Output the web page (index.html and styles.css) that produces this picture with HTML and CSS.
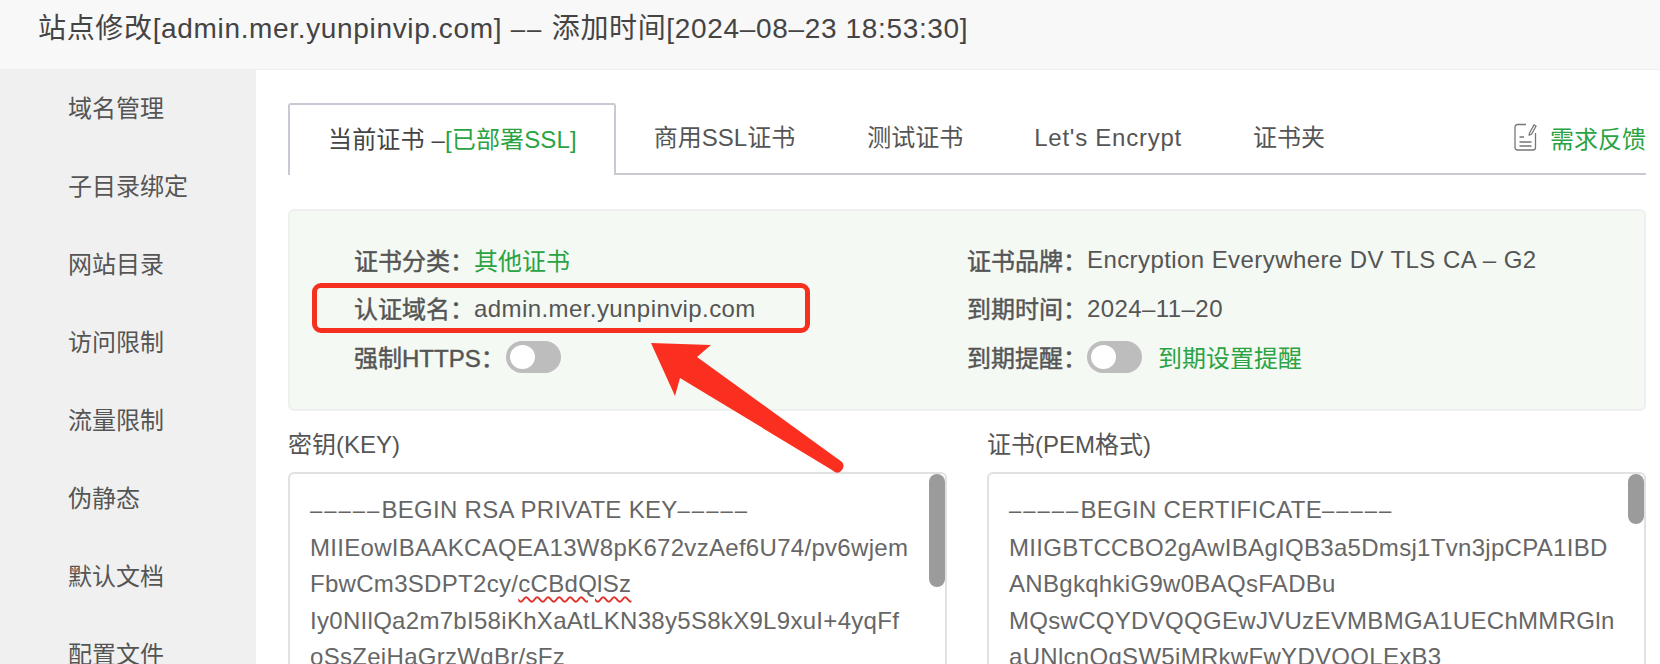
FILE: index.html
```html
<!DOCTYPE html>
<html lang="zh-CN">
<head>
<meta charset="utf-8">
<title>站点修改</title>
<link rel="stylesheet" href="styles.css">
</head>
<body>
<header class="title">站点修改[admin.mer.yunpinvip.com] <span class="dash">––</span> 添加时间[2024–08–23 18:53:30]</header>
<div class="shell">
  <nav class="side">
    <a>域名管理</a><a>子目录绑定</a><a>网站目录</a><a>访问限制</a><a>流量限制</a><a>伪静态</a><a>默认文档</a><a>配置文件</a>
  </nav>
  <main class="content">
    <div class="tabs">
      <span class="tab active">当前证书 –<span class="green">[已部署SSL]</span></span>
      <span class="tab">商用SSL证书</span>
      <span class="tab">测试证书</span>
      <span class="tab lat-wide">Let's Encrypt</span>
      <span class="tab">证书夹</span>
      <span class="feedback">
        <svg class="fb-icon" viewBox="0 0 23 28" width="23" height="28" fill="none" stroke="#777" stroke-width="1.3">
          <path d="M12 1.500H3.500A2.500 2.500 0 0 0 1 4V24.500A2.500 2.500 0 0 0 3.500 27h15.500a2.500 2.500 0 0 0 2.500-2.500V10"/>
          <path d="M15.500 10 20 2 22 3.200 17.500 11.200l-2.300.9z"/>
          <path d="M5.500 14h4.500M5.500 19h12M5.500 23h12"/>
        </svg>
        <span class="green">需求反馈</span>
      </span>
    </div>

    <section class="alert">
      <div class="info">
        <div class="row"><b class="lab">证书分类<i>：</i></b><span class="green">其他证书</span></div>
        <div class="row"><b class="lab">证书品牌<i>：</i></b><span class="lat">Encryption Everywhere DV TLS CA – G2</span></div>
        <div class="row"><b class="lab">认证域名<i>：</i></b><span class="lat">admin.mer.yunpinvip.com</span></div>
        <div class="row"><b class="lab">到期时间<i>：</i></b><span class="lat">2024–11–20</span></div>
        <div class="row"><b class="lab auto">强制HTTPS<i>：</i></b><span class="toggle"></span></div>
        <div class="row"><b class="lab">到期提醒<i>：</i></b><span class="toggle"></span><span class="green remind">到期设置提醒</span></div>
      </div>
    </section>

    <div class="pems">
      <div class="pem">
        <div class="pem-label">密钥(KEY)</div>
        <div class="area">
          <div class="thumb long"></div>
          <div><span class="dash">–––––</span>BEGIN RSA PRIVATE KEY<span class="dash">–––––</span></div>
          <div>MIIEowIBAAKCAQEA13W8pK672vzAef6U74/pv6wjem</div>
          <div>FbwCm3SDPT2cy/<span class="spell">cCBdQlSz</span></div>
          <div>Iy0NIlQa2m7bI58iKhXaAtLKN38y5S8kX9L9xuI+4yqFf</div>
          <div>oSsZeiHaGrzWgBr/sFz</div>
        </div>
      </div>
      <div class="pem">
        <div class="pem-label">证书(PEM格式)</div>
        <div class="area">
          <div class="thumb short"></div>
          <div><span class="dash">–––––</span>BEGIN CERTIFICATE<span class="dash">–––––</span></div>
          <div>MIIGBTCCBO2gAwIBAgIQB3a5Dmsj1Tvn3jpCPA1IBD</div>
          <div>ANBgkqhkiG9w0BAQsFADBu</div>
          <div>MQswCQYDVQQGEwJVUzEVMBMGA1UEChMMRGln</div>
          <div>aUNlcnQgSW5jMRkwFwYDVQQLExB3</div>
        </div>
      </div>
    </div>
  </main>
</div>

<div class="mark-box"></div>
<svg class="mark-arrow" viewBox="0 0 200 140" width="200" height="140">
  <path d="M1 2 61 4 47 16 192 121Q196 126 190 131 186 133 182 129L30 37 25 55Z" fill="#fb2f20"/>
</svg>
</body>
</html>
```
FILE: styles.css
```css
* { box-sizing: border-box; }
html, body { margin: 0; height: 664px; overflow: hidden; background: #fff; }
body {
  position: relative;
  font-family: "Liberation Sans", "Noto Sans CJK SC", sans-serif;
  font-size: 24px;
  color: #555;
}
.title {
  height: 70px;
  padding: 11px 0 0 38px;
  font-size: 28px;
  letter-spacing: 0.66px;
  line-height: 36px;
  color: #444;
  background: #f8f8f8;
  border-bottom: 1px solid #eee;
  white-space: nowrap;
}
.dash { font-size: 0.92em; letter-spacing: 2px; }
.shell { display: flex; height: 594px; }
.side {
  flex: 0 0 256px;
  height: 594px;
  overflow: hidden;
  background: #f0f0f0;
  padding: 0 0 0 68px;
  display: flex;
  flex-direction: column;
}
.side a { flex: 0 0 78px; line-height: 78px; color: #555; }
.content { flex: 1; padding: 33px 14px 0 32px; min-width: 0; }
.green { color: #2aa343; }
.lat { letter-spacing: 0.42px; }

.tabs {
  display: flex;
  align-items: stretch;
  height: 72px;
  border-bottom: 2px solid #c9c9d4;
  font-size: 24px;
}
.tab { padding: 0 36px; line-height: 70px; color: #555; white-space: nowrap; }
.tab.lat-wide { letter-spacing: 0.75px; padding: 0 35px; }
.tab.active {
  height: 72px;
  padding: 0 37px 0 38px;
  margin-right: 2px;
  color: #444;
  background: #fff;
  border: 2px solid #c9c9d4;
  border-bottom: 0;
  border-radius: 3px 3px 0 0;
  letter-spacing: 0.15px;
}
.feedback { margin-left: auto; display: flex; align-items: center; gap: 13px; padding-bottom: 2px; }
.fb-icon { display: block; }

.alert {
  margin-top: 34px;
  height: 202px;
  padding: 25px 0 0 64px;
  background: #f4f9f3;
  border: 2px solid #eef0f0;
  border-radius: 6px;
}
.info { display: grid; grid-template-columns: 613px 1fr; grid-auto-rows: 48.500px; }
.row { display: flex; align-items: center; white-space: nowrap; }
.lab { flex: 0 0 120px; margin-top: -2px; font-weight: 400; -webkit-text-stroke: 0.45px #555; color: #555; }
.lab i { font-style: normal; font-family: "Noto Sans CJK TC", sans-serif; font-weight: 400; }
.lab.auto { flex: 0 0 152px; }
.row > .green { margin-top: -2px; }
.toggle {
  position: relative;
  flex: 0 0 55px;
  height: 32px;
  border-radius: 16px;
  background: #bdbdbd;
}
.toggle::after {
  content: "";
  position: absolute;
  left: 4px;
  top: 4px;
  width: 25px;
  height: 24px;
  border-radius: 50%;
  background: #fff;
}
.remind { margin-left: 16px; }

.pems { display: grid; grid-template-columns: 659px 659px; column-gap: 40px; margin-top: 17px; }
.pem-label { height: 34px; line-height: 34px; margin-bottom: 10px; color: #555; }
.area {
  position: relative;
  height: 192px;
  padding: 18px 0 0 20px;
  font-size: 24px;
  letter-spacing: 0.3px;
  line-height: 36.500px;
  color: #666;
  border: 2px solid #dfe1e3;
  border-bottom: 0;
  border-radius: 6px 6px 0 0;
  white-space: nowrap;
  overflow: hidden;
}
.spell { text-decoration: underline wavy #e0312a 1.5px; text-underline-offset: 4px; }
.thumb {
  position: absolute;
  top: 0;
  right: 0;
  width: 16px;
  border-radius: 8px;
  background: #9b9b9b;
}
.thumb.long { height: 113px; }
.thumb.short { height: 50px; }

/* annotation drawn over the screenshot */
.mark-box {
  position: absolute;
  left: 312px;
  top: 283px;
  width: 498px;
  height: 50px;
  border: 5px solid #f5301f;
  border-radius: 9px;
}
.mark-arrow { position: absolute; left: 650px; top: 341px; }
```
